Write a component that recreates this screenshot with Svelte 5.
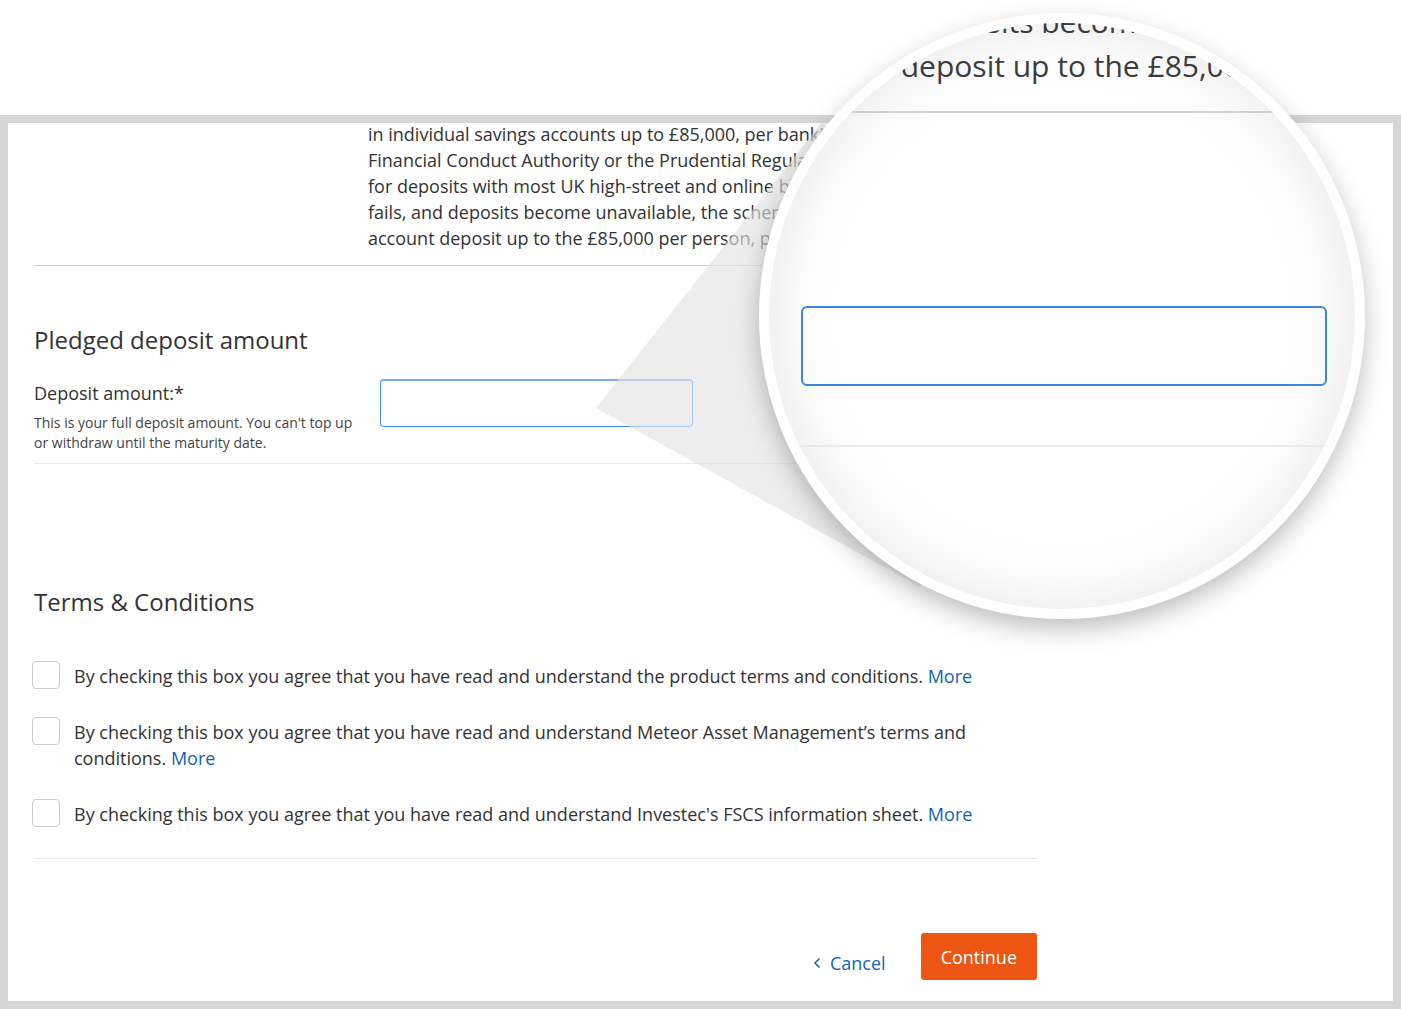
<script lang="ts">
  const schemeLines = [
    'in individual savings accounts up to £85,000, per banking',
    'Financial Conduct Authority or the Prudential Regulation',
    'for deposits with most UK high-street and online banks.',
    'fails, and deposits become unavailable, the scheme',
    'account deposit up to the £85,000 per person, per'
  ];

  const zoomedLines = ['fails, and deposits become', 'account deposit up to the £85,000'];

  const terms = [
    { id: 'product', text: 'By checking this box you agree that you have read and understand the product terms and conditions.' },
    { id: 'meteor', text: 'By checking this box you agree that you have read and understand Meteor Asset Management’s terms and conditions.' },
    { id: 'fscs', text: "By checking this box you agree that you have read and understand Investec's FSCS information sheet." }
  ];

  let amount = $state('');
  let accepted: Record<string, boolean> = $state({ product: false, meteor: false, fscs: false });
</script>

<div class="page">
  <main class="frame">
    <form class="content" onsubmit={(e) => e.preventDefault()}>
      <section class="scheme">
        <p>
          {#each schemeLines as line}
            <span>{line}</span>
          {/each}
        </p>
      </section>

      <section class="pledge">
        <h2>Pledged deposit amount</h2>
        <div class="field">
          <div class="field-copy">
            <label for="amount">Deposit amount:*</label>
            <p id="amount-help">This is your full deposit amount. You can't top up or withdraw until the maturity date.</p>
          </div>
          <input id="amount" class="amount" type="text" aria-describedby="amount-help" bind:value={amount} />
        </div>
      </section>

      <section class="terms">
        <h2>Terms &amp; Conditions</h2>
        <ul>
          {#each terms as term}
            <li>
              <input type="checkbox" id={term.id} bind:checked={accepted[term.id]} />
              <div class="term-text">
                <label for={term.id}>{term.text}</label>
                <a href="#{term.id}">More</a>
              </div>
            </li>
          {/each}
        </ul>
      </section>

      <div class="actions">
        <a class="cancel" href="#cancel">
          <svg viewBox="0 0 8 12" aria-hidden="true"><path d="M6.5 1.5 2 6l4.5 4.5" /></svg>
          Cancel
        </a>
        <button type="submit">Continue</button>
      </div>
    </form>
  </main>

  <!-- magnified view of the deposit field -->
  <div class="callout">
    <svg class="beam" viewBox="0 0 769 606" aria-hidden="true">
      <polygon points="0,395 226,109 466,303 324,574" />
    </svg>
    <div class="lens">
      <p class="lens-text">
        {#each zoomedLines as line}
          <span>{line}</span>
        {/each}
      </p>
      <div class="lens-field">
        <input type="text" aria-label="Deposit amount, magnified" tabindex="-1" readonly value={amount} />
      </div>
    </div>
  </div>
</div>

<style>
  :global(body) {
    margin: 0;
    background: #fff;
  }

  .page {
    position: relative;
    padding-top: 115px;
    overflow: hidden;
    font-family: 'Open Sans', 'Noto Sans', sans-serif;
    font-size: 18px;
    line-height: 26px;
    color: #333;
  }

  .page * {
    box-sizing: border-box;
  }

  h2,
  p,
  ul {
    margin: 0;
    padding: 0;
  }

  h2 {
    font-size: 24px;
    line-height: 30px;
    font-weight: 400;
  }

  a {
    color: #1164b8;
    text-decoration: none;
  }

  .frame {
    border: 8px solid #d6d6d6;
    padding: 0 26px 21px;
    overflow: hidden;
  }

  .content {
    max-width: 1003px;
  }

  .scheme {
    margin-top: -2px;
    padding: 0 0 14px 334px;
    border-bottom: 1px solid #d0d0d0;
  }

  .scheme span,
  .lens-text span {
    display: block;
    white-space: nowrap;
  }

  .pledge {
    padding: 59px 0 10px;
    border-bottom: 1px solid #e9e9e9;
  }

  .field {
    display: flex;
    align-items: flex-start;
    gap: 16px;
    margin-top: 24px;
  }

  .field-copy {
    display: flex;
    flex-direction: column;
    gap: 7px;
    width: 330px;
    padding-top: 1px;
  }

  .field-copy p {
    font-size: 14px;
    line-height: 20px;
    color: #444;
  }

  .amount {
    width: 313px;
    height: 48px;
    padding: 0 16px;
    border: 1px solid #418ff6;
    border-top: 2px solid #76aefd;
    border-radius: 4px;
    background: #fff;
    font: inherit;
    color: inherit;
    outline: none;
  }

  .terms {
    padding: 123px 0 31px;
    border-bottom: 1px solid #e9e9e9;
  }

  .terms ul {
    display: grid;
    gap: 28px;
    margin: 44px 0 0 -2px;
    list-style: none;
  }

  .terms li {
    display: flex;
    align-items: flex-start;
    gap: 14px;
  }

  .terms input {
    appearance: none;
    flex: none;
    width: 28px;
    height: 28px;
    margin: 0;
    border: 1px solid #ccc;
    border-radius: 4px;
    background: #fff;
  }

  .terms input:checked {
    background: #1164b8;
    box-shadow: inset 0 0 0 5px #fff;
  }

  .term-text {
    max-width: 920px;
    padding-top: 2px;
  }

  .actions {
    display: flex;
    justify-content: flex-end;
    align-items: center;
    gap: 35px;
    padding-top: 74px;
  }

  .cancel {
    display: flex;
    align-items: center;
    gap: 9px;
    padding-top: 12px;
  }

  .cancel svg {
    width: 8px;
    height: 12px;
    fill: none;
    stroke: currentColor;
    stroke-width: 1.5;
  }

  button {
    height: 47px;
    padding: 0 20px;
    border: 0;
    border-radius: 3px;
    background: #ed5612;
    color: #fff;
    font: inherit;
    cursor: pointer;
  }

  .callout {
    position: absolute;
    top: 13px;
    left: 596px;
    width: 769px;
    height: 606px;
    display: flex;
    justify-content: flex-end;
    pointer-events: none;
  }

  .beam {
    position: absolute;
    inset: 0;
    fill: rgba(227, 227, 227, 0.64);
  }

  .lens {
    position: relative;
    width: 606px;
    border: 10px solid #fff;
    border-radius: 50%;
    overflow: hidden;
    background: #fff;
    box-shadow:
      0 10px 24px rgba(0, 0, 0, 0.25),
      inset 0 0 70px rgba(0, 0, 0, 0.1);
  }

  .lens-text {
    margin-top: -23px;
    padding: 0 0 23px 13px;
    border-bottom: 2px solid #d0d0d0;
    font-size: 30px;
    line-height: 44px;
    color: #3c3c3c;
  }

  .lens-field {
    padding: 193px 28px 59px 32px;
    border-bottom: 2px solid #ebebeb;
  }

  .lens-field input {
    display: block;
    width: 100%;
    height: 80px;
    padding: 0 26px;
    border: 2px solid #3b87e0;
    border-radius: 6px;
    background: transparent;
    font: inherit;
    font-size: 30px;
    color: inherit;
    outline: none;
  }
</style>
